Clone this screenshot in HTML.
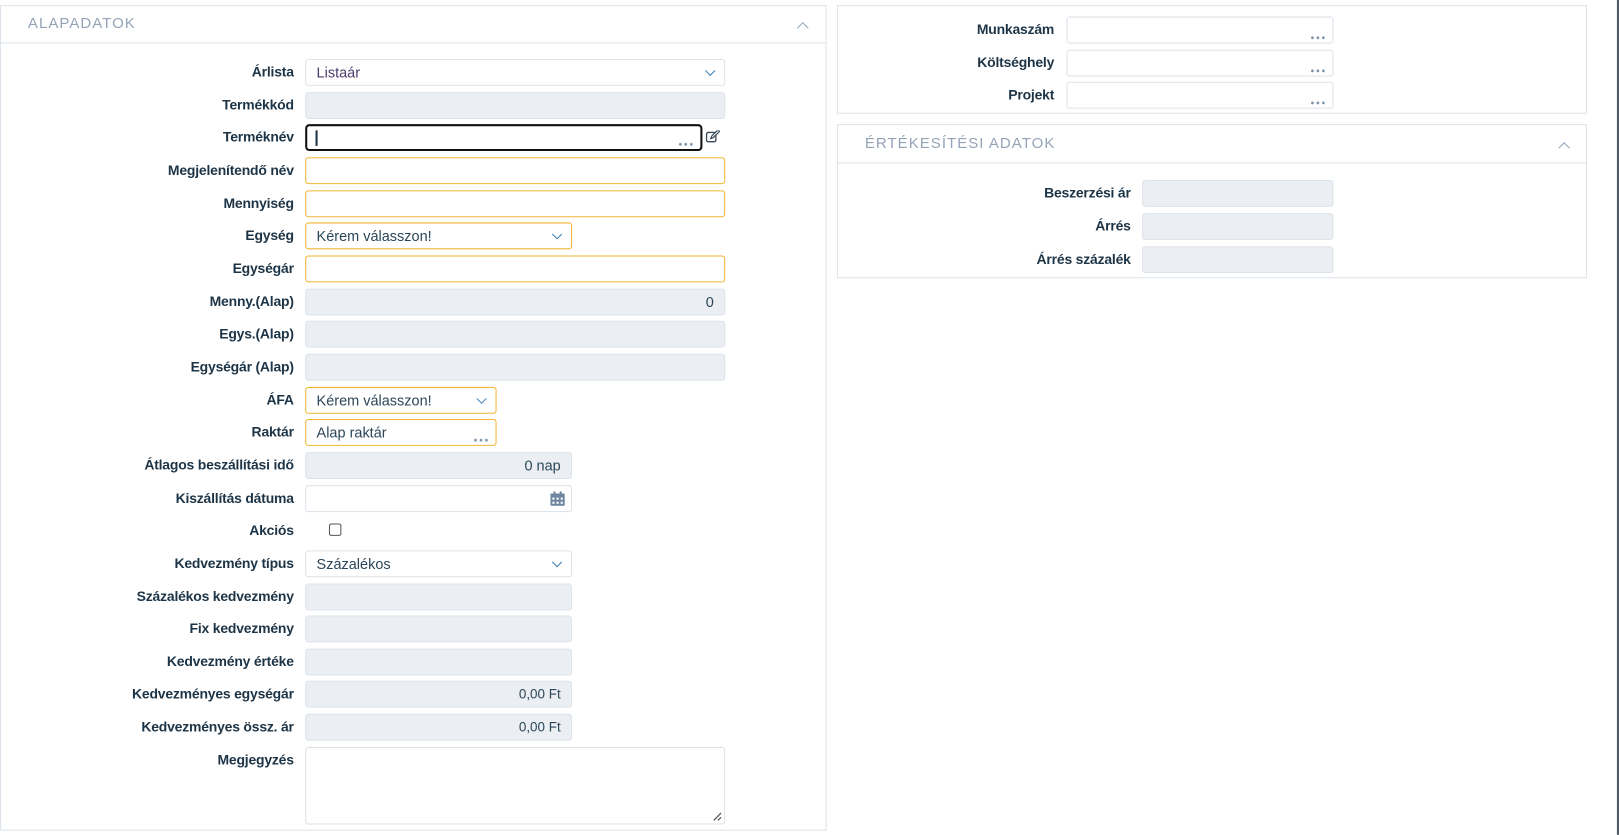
<!DOCTYPE html>
<html><head><meta charset="utf-8"><style>
html,body{margin:0;padding:0;background:#fff;width:1619px;height:835px;overflow:hidden}
#w{position:absolute;left:0;top:0;width:1565px;height:807px;transform:scale(1.0345);transform-origin:0 0;font-family:"Liberation Sans",sans-serif}
.panel{position:absolute;border:1px solid #dde3ea;box-sizing:border-box;background:#fff}
.hdr{position:absolute;left:0;right:0;top:0;border-bottom:1px solid #dde3ea;box-sizing:border-box}
.ttl{position:absolute;font-size:14.5px;color:#94a3b6;letter-spacing:1px}
.chev{position:absolute;width:7px;height:7px;border-left:1.3px solid #8fa6bd;border-top:1.3px solid #8fa6bd;transform:rotate(45deg)}
.lab{position:absolute;text-align:right;font-weight:bold;font-size:13.5px;color:#1d3446;line-height:26px;white-space:nowrap;letter-spacing:-0.2px}
.in{position:absolute;height:26px;box-sizing:border-box;border:1px solid #dde3ea;border-radius:3px;background:#fff;font-size:14px;color:#2b4659;line-height:24px;padding:0 10px}
.dis{background:#ebeff3}
.or{border-color:#f2b632}
.r{text-align:right}
.dd{position:absolute;right:10px;top:7px;width:6px;height:6px;border-right:1.3px solid #3b7fb5;border-bottom:1.3px solid #3b7fb5;transform:rotate(45deg)}
.dots{position:absolute;right:6px;bottom:3px;width:16px;height:3px;background:radial-gradient(circle,#7890a8 1.2px,transparent 1.5px) 0 0/5.3px 3px repeat-x}
</style></head><body><div id="w">

<div class="panel" style="left:0;top:5px;width:799px;height:798px">
 <div class="hdr" style="height:36px"><div class="ttl" style="left:26px;top:9px">ALAPADATOK</div><div class="chev" style="left:771px;top:17px"></div></div>
</div>

<div class="lab" style="right:1281px;top:57px">Árlista</div>
<div class="in" style="left:295px;top:57px;width:406px;color:#4b3b6b">Listaár<div class="dd"></div></div>
<div class="lab" style="right:1281px;top:89px">Termékkód</div>
<div class="in dis" style="left:295px;top:89px;width:406px"></div>
<div class="lab" style="right:1281px;top:120px">Terméknév</div>
<div class="in" style="left:295px;top:120px;width:384px;border:2px solid #111;border-radius:4px"><div style="position:absolute;left:8px;top:4px;width:1.5px;height:15px;background:#1d3446"></div><div class="dots"></div></div>
<svg style="position:absolute;left:682px;top:126px" width="14" height="13" viewBox="0 0 14 13"><rect x="1" y="2" width="9" height="9" rx="1.5" fill="none" stroke="#3a4a58" stroke-width="1.3"/><path d="M5 8l1-2.5 6-6 1.5 1.5-6 6z" fill="#fff" stroke="#3a4a58" stroke-width="1.2"/></svg>
<div class="lab" style="right:1281px;top:152px">Megjelenítendő név</div>
<div class="in or" style="left:295px;top:152px;width:406px"></div>
<div class="lab" style="right:1281px;top:184px">Mennyiség</div>
<div class="in or" style="left:295px;top:184px;width:406px"></div>
<div class="lab" style="right:1281px;top:215px">Egység</div>
<div class="in or" style="left:295px;top:215px;width:258px">Kérem válasszon!<div class="dd"></div></div>
<div class="lab" style="right:1281px;top:247px">Egységár</div>
<div class="in or" style="left:295px;top:247px;width:406px"></div>
<div class="lab" style="right:1281px;top:279px">Menny.(Alap)</div>
<div class="in dis r" style="left:295px;top:279px;width:406px">0</div>
<div class="lab" style="right:1281px;top:310px">Egys.(Alap)</div>
<div class="in dis" style="left:295px;top:310px;width:406px"></div>
<div class="lab" style="right:1281px;top:342px">Egységár (Alap)</div>
<div class="in dis" style="left:295px;top:342px;width:406px"></div>
<div class="lab" style="right:1281px;top:374px">ÁFA</div>
<div class="in or" style="left:295px;top:374px;width:185px">Kérem válasszon!<div class="dd"></div></div>
<div class="lab" style="right:1281px;top:405px">Raktár</div>
<div class="in or" style="left:295px;top:405px;width:185px">Alap raktár<div class="dots"></div></div>
<div class="lab" style="right:1281px;top:437px">Átlagos beszállítási idő</div>
<div class="in dis r" style="left:295px;top:437px;width:258px">0 nap</div>
<div class="lab" style="right:1281px;top:469px">Kiszállítás dátuma</div>
<div class="in" style="left:295px;top:469px;width:258px"><svg style="position:absolute;right:6px;top:5px" width="14" height="14" viewBox="0 0 14 14"><rect x="0" y="2" width="14" height="12" rx="1" fill="#6f86a0"/><rect x="3" y="0" width="2" height="3" fill="#6f86a0"/><rect x="9" y="0" width="2" height="3" fill="#6f86a0"/><g fill="#fff"><rect x="2" y="6" width="2" height="2"/><rect x="6" y="6" width="2" height="2"/><rect x="10" y="6" width="2" height="2"/><rect x="2" y="10" width="2" height="2"/><rect x="6" y="10" width="2" height="2"/><rect x="10" y="10" width="2" height="2"/></g></svg></div>
<div class="lab" style="right:1281px;top:500px">Akciós</div>
<div style="position:absolute;left:318px;top:506px;width:12px;height:12px;border:1px solid #555;border-radius:2px;box-sizing:border-box"></div>
<div class="lab" style="right:1281px;top:532px">Kedvezmény típus</div>
<div class="in" style="left:295px;top:532px;width:258px">Százalékos<div class="dd"></div></div>
<div class="lab" style="right:1281px;top:564px">Százalékos kedvezmény</div>
<div class="in dis" style="left:295px;top:564px;width:258px"></div>
<div class="lab" style="right:1281px;top:595px">Fix kedvezmény</div>
<div class="in dis" style="left:295px;top:595px;width:258px"></div>
<div class="lab" style="right:1281px;top:627px">Kedvezmény értéke</div>
<div class="in dis" style="left:295px;top:627px;width:258px"></div>
<div class="lab" style="right:1281px;top:658px">Kedvezményes egységár</div>
<div class="in dis r" style="left:295px;top:658px;width:258px;font-size:13px">0,00 Ft</div>
<div class="lab" style="right:1281px;top:690px">Kedvezményes össz. ár</div>
<div class="in dis r" style="left:295px;top:690px;width:258px;font-size:13px">0,00 Ft</div>
<div class="lab" style="right:1281px;top:722px">Megjegyzés</div>
<div class="in" style="left:295px;top:722px;width:406px;height:75px"><svg style="position:absolute;right:2px;bottom:2px" width="9" height="9" viewBox="0 0 9 9"><path d="M1 8L8 1M5 8L8 5" stroke="#555" stroke-width="1.2"/></svg></div>

<div class="panel" style="left:809px;top:5px;width:725px;height:105px"></div>
<div class="lab" style="right:546px;top:16px">Munkaszám</div>
<div class="in" style="left:1031px;top:16px;width:258px"><div class="dots"></div></div>
<div class="lab" style="right:546px;top:48px">Költséghely</div>
<div class="in" style="left:1031px;top:48px;width:258px"><div class="dots"></div></div>
<div class="lab" style="right:546px;top:79px">Projekt</div>
<div class="in" style="left:1031px;top:79px;width:258px"><div class="dots"></div></div>

<div class="panel" style="left:809px;top:120px;width:725px;height:149px">
 <div class="hdr" style="height:37px"><div class="ttl" style="left:26px;top:10px">ÉRTÉKESÍTÉSI ADATOK</div><div class="chev" style="left:698px;top:18px"></div></div>
</div>
<div class="lab" style="right:472px;top:174px">Beszerzési ár</div>
<div class="in dis" style="left:1104px;top:174px;width:185px"></div>
<div class="lab" style="right:472px;top:206px">Árrés</div>
<div class="in dis" style="left:1104px;top:206px;width:185px"></div>
<div class="lab" style="right:472px;top:238px">Árrés százalék</div>
<div class="in dis" style="left:1104px;top:238px;width:185px"></div>

<div style="position:absolute;left:1563px;top:0;width:2px;height:807px;background:#4a5a66"></div>
</div></body></html>
